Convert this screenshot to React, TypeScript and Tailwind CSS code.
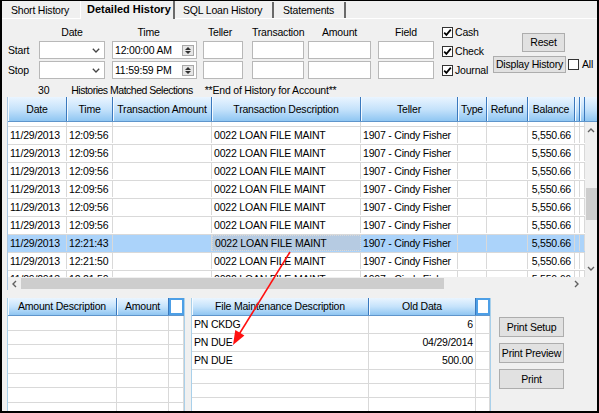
import React from "react";

/* column sets for the three grids (widths written out so tailwind picks them up) */
const mainCols = [
  { label: "Date", cls: "w-[59px]" },
  { label: "Time", cls: "w-[46px]" },
  { label: "Transaction Amount", cls: "w-[99px]" },
  { label: "Transaction Description", cls: "w-[149px]" },
  { label: "Teller", cls: "w-[97px]" },
  { label: "Type", cls: "w-[29px]" },
  { label: "Refund", cls: "w-[41px]" },
  { label: "Balance", cls: "w-[47px]" },
  { label: "", cls: "w-[5px]" },
  { label: "", cls: "w-[5px]" },
];

const history = [
  { date: "11/29/2013", time: "12:09:56" },
  { date: "11/29/2013", time: "12:09:56" },
  { date: "11/29/2013", time: "12:09:56" },
  { date: "11/29/2013", time: "12:09:56" },
  { date: "11/29/2013", time: "12:09:56" },
  { date: "11/29/2013", time: "12:09:56" },
  { date: "11/29/2013", time: "12:21:43", selected: true },
  { date: "11/29/2013", time: "12:21:50" },
  { date: "11/29/2013", time: "12:21:50" },
];

const fileMaint = [
  { desc: "PN CKDG", old: "6" },
  { desc: "PN DUE", old: "04/29/2014" },
  { desc: "PN DUE", old: "500.00" },
];

const headBg = "bg-linear-to-b from-[#eaf5ff] via-[#c6e3fb] to-[#8fc6f2]";
const headCell =
  "shrink-0 h-full flex items-center justify-center border-r border-[#3a78bd] shadow-[inset_1px_0_0_#f4faff] whitespace-nowrap overflow-hidden";
const cell =
  "shrink-0 h-full flex items-center border-r border-[#d9d9d9] px-[2px] whitespace-nowrap overflow-hidden";

const Check = ({ checked }: { checked?: boolean }) => (
  <span className="w-[11px] h-[11px] shrink-0 border border-[#333] bg-white flex items-center justify-center">
    {checked && (
      <svg width="9" height="9" viewBox="0 0 9 9">
        <path d="M1.2 4.6 L3.4 6.9 L7.8 1.6" stroke="#000" strokeWidth="1.7" fill="none" />
      </svg>
    )}
  </span>
);

const Btn = ({ children, className = "" }: { children: React.ReactNode; className?: string }) => (
  <div
    className={`flex items-center justify-center bg-[#e1e1e1] border border-[#adadad] whitespace-nowrap ${className}`}
  >
    {children}
  </div>
);

const Chevron = ({ dir }: { dir: "up" | "down" | "left" | "right" }) => {
  const d = {
    up: "M1 5 L4 2 L7 5",
    down: "M1 2 L4 5 L7 2",
    left: "M5 1 L2 4 L5 7",
    right: "M2 1 L5 4 L2 7",
  }[dir];
  return (
    <svg width="8" height="8" viewBox="0 0 8 8">
      <path d={d} stroke="#606060" strokeWidth="1.4" fill="none" />
    </svg>
  );
};

const Combo = () => (
  <div className="h-[18px] w-[66px] bg-white border border-[#b8b8b8] flex items-center justify-end pr-[4px]">
    <svg width="8" height="5" viewBox="0 0 8 5">
      <path d="M0.8 0.8 L4 4 L7.2 0.8" stroke="#444" strokeWidth="1.3" fill="none" />
    </svg>
  </div>
);

const TimeBox = ({ value }: { value: string }) => (
  <div className="h-[18px] w-[85px] bg-white border border-[#b8b8b8] flex items-center justify-between pl-[2px] pr-[2px]">
    <span>{value}</span>
    <div className="w-[12px] h-[11px] bg-[#e6e6e6] border border-[#a8a8a8] flex flex-col items-center justify-center gap-[1px]">
      <svg width="6" height="3" viewBox="0 0 6 3">
        <path d="M0 3 L3 0 L6 3 Z" fill="#333" />
      </svg>
      <svg width="6" height="3" viewBox="0 0 6 3">
        <path d="M0 0 L3 3 L6 0 Z" fill="#333" />
      </svg>
    </div>
  </div>
);

const TextBox = ({ w }: { w: string }) => (
  <div className={`h-[18px] ${w} bg-white border border-[#b8b8b8]`} />
);

export default function App() {
  return (
    <div className="relative w-[599px] h-[413px] overflow-hidden bg-[#f0f0f0] border-black border-t border-l-2 border-r-2 border-b-2 font-['Liberation_Sans',Arial,sans-serif] text-[10.5px] tracking-[-0.2px] text-black leading-none">
      {/* tabs */}
      <div className="flex h-[18px] items-end border-b border-white">
        <div className="h-[16px] w-[78px] pl-[9px] flex items-center">Short History</div>
        <div className="w-[95px] pl-[6px] flex items-center font-bold text-[11px] tracking-normal border-l border-white border-r-2 border-r-[#6a6a6a] bg-[#f0f0f0] -mb-[1px] h-[19px]">
          Detailed History
        </div>
        <div className="h-[16px] w-[99px] pl-[8px] flex items-center border-r-2 border-r-[#6a6a6a]">
          SQL Loan History
        </div>
        <div className="h-[16px] w-[72px] pl-[9px] flex items-center border-r-2 border-r-[#6a6a6a]">
          Statements
        </div>
      </div>

      {/* filters */}
      <div className="flex h-[64px]">
        <div className="flex flex-col">
          <div className="flex h-[14px] mt-[6px] items-center">
            <div className="w-[37px]" />
            <div className="w-[66px] text-center">Date</div>
            <div className="w-[85px] ml-[7px] text-center pr-[12px]">Time</div>
            <div className="w-[40px] ml-[6px] text-center pr-[6px]">Teller</div>
            <div className="w-[52px] ml-[9px] text-center pr-[6px]">Transaction</div>
            <div className="w-[63px] ml-[4px] text-center">Amount</div>
            <div className="w-[56px] ml-[7px] text-center">Field</div>
          </div>
          {[
            { label: "Start", time: "12:00:00 AM" },
            { label: "Stop", time: "11:59:59 PM" },
          ].map((r) => (
            <div key={r.label} className="flex items-center mt-[2px]">
              <div className="w-[37px] pl-[6px]">{r.label}</div>
              <Combo />
              <div className="ml-[7px]">
                <TimeBox value={r.time} />
              </div>
              <div className="ml-[6px]">
                <TextBox w="w-[40px]" />
              </div>
              <div className="ml-[9px]">
                <TextBox w="w-[52px]" />
              </div>
              <div className="ml-[4px]">
                <TextBox w="w-[63px]" />
              </div>
              <div className="ml-[7px]">
                <TextBox w="w-[56px]" />
              </div>
            </div>
          ))}
        </div>

        <div className="ml-[8px] w-[51px] flex flex-col pt-[8px] gap-[8px]">
          {["Cash", "Check", "Journal"].map((c) => (
            <div key={c} className="flex items-center gap-[2px] h-[11px]">
              <Check checked />
              <span>{c}</span>
            </div>
          ))}
        </div>

        <div className="flex flex-col pt-[14px]">
          <Btn className="ml-[29px] w-[43px] h-[19px]">Reset</Btn>
          <div className="flex items-center mt-[4px]">
            <Btn className="w-[73px] h-[17px]">Display History</Btn>
            <div className="ml-[2px]">
              <Check />
            </div>
            <span className="ml-[3px]">All</span>
          </div>
        </div>
      </div>

      {/* status line */}
      <div className="flex h-[13px] items-center mt-[1px]">
        <span className="ml-[36px]">30</span>
        <span className="ml-[22px] tracking-[-0.5px]">Histories Matched Selections</span>
        <span className="ml-[12px]">**End of History for Account**</span>
      </div>

      {/* main grid */}
      <div className="ml-[5px] flex flex-col border-l border-[#a9c6e2]">
        <div className={`flex h-[25px] ${headBg} border-b border-[#5f95cb]`}>
          {mainCols.map((c, i) => (
            <div key={i} className={`${headCell} ${c.cls}`}>
              {c.label}
            </div>
          ))}
          <div className="flex-1" />
        </div>
        <div className="flex h-[155px]">
          <div className="w-[577px] bg-white overflow-hidden flex flex-col">
            <div className="flex h-[5px] shrink-0 border-b border-[#d9d9d9]">
              {mainCols.map((c, i) => (
                <div key={i} className={`${cell} ${c.cls}`} />
              ))}
            </div>
            {history.map((r, i) => (
              <div
                key={i}
                className={`flex h-[18px] shrink-0 border-b border-[#d9d9d9] pb-[1px] ${
                  r.selected ? "bg-[#abd3fa]" : ""
                }`}
              >
                <div className={`${cell} w-[59px]`}>{r.date}</div>
                <div className={`${cell} w-[46px]`}>{r.time}</div>
                <div className={`${cell} w-[99px]`} />
                <div
                  className={`${cell} w-[149px] ${
                    r.selected ? "border border-dotted border-[#4b5d78] bg-[#b6cbe2]" : ""
                  }`}
                >
                  0022 LOAN FILE MAINT
                </div>
                <div className={`${cell} w-[97px]`}>1907 - Cindy Fisher</div>
                <div className={`${cell} w-[29px]`} />
                <div className={`${cell} w-[41px]`} />
                <div className={`${cell} w-[47px] justify-end pr-[3px]`}>5,550.66</div>
                <div className={`${cell} w-[5px]`} />
                <div className={`${cell} w-[5px]`} />
              </div>
            ))}
          </div>
          {/* vertical scrollbar */}
          <div className="flex-1 bg-[#f0f0f0] flex flex-col items-center">
            <div className="h-[17px] flex items-center">
              <Chevron dir="up" />
            </div>
            <div className="mt-[49px] w-[11px] h-[32px] bg-[#cdcdcd]" />
            <div className="flex-1" />
            <div className="h-[17px] flex items-center">
              <Chevron dir="down" />
            </div>
          </div>
        </div>
        {/* horizontal scrollbar */}
        <div className="flex h-[13px]">
          <div className="w-[577px] bg-[#f0f0f0] flex items-center">
            <div className="w-[13px] flex justify-center">
              <Chevron dir="left" />
            </div>
            <div className="w-[423px] h-[11px] bg-[#cdcdcd]" />
            <div className="flex-1" />
            <div className="w-[16px] flex justify-center">
              <Chevron dir="right" />
            </div>
          </div>
          <div className="flex-1 bg-[#f0f0f0]" />
        </div>
      </div>

      {/* bottom panels */}
      <div className="flex ml-[5px] mt-[8px]">
        {/* amount grid */}
        <div className="w-[178px] h-[115px] border-x border-[#a9d0ea] bg-white flex flex-col overflow-hidden">
          <div className={`flex h-[18px] shrink-0 ${headBg} border-b border-[#5f95cb]`}>
            <div className={`${headCell} w-[109px]`}>Amount Description</div>
            <div className={`${headCell} w-[52px]`}>Amount</div>
            <div className="w-[15px] h-full bg-white border-2 border-[#4d9fe6]" />
          </div>
          {[15, 14, 14, 15, 14, 15, 14].map((h, i) => (
            <div
              key={i}
              className={`flex shrink-0 border-b border-[#d9d9d9] ${h === 15 ? "h-[15px]" : "h-[14px]"}`}
            >
              <div className={`${cell} w-[109px]`} />
              <div className={`${cell} w-[52px]`} />
              <div className={`${cell} w-[15px]`} />
            </div>
          ))}
        </div>

        {/* file maintenance grid */}
        <div className="ml-[6px] w-[300px] h-[115px] border-x border-[#a9d0ea] bg-white flex flex-col overflow-hidden">
          <div className={`flex h-[18px] shrink-0 ${headBg} border-b border-[#5f95cb]`}>
            <div className={`${headCell} w-[177px]`}>File Maintenance Description</div>
            <div className={`${headCell} w-[107px]`}>Old Data</div>
            <div className="w-[14px] h-full bg-white border-2 border-[#4d9fe6]" />
          </div>
          {fileMaint.map((r, i) => (
            <div key={i} className="flex h-[18px] shrink-0 border-b border-[#d9d9d9]">
              <div className={`${cell} w-[177px]`}>{r.desc}</div>
              <div className={`${cell} w-[107px] justify-end`}>{r.old}</div>
              <div className={`${cell} w-[14px]`} />
            </div>
          ))}
          {[0, 1, 2].map((i) => (
            <div key={i} className="flex h-[14px] shrink-0 border-b border-[#d9d9d9]">
              <div className={`${cell} w-[177px]`} />
              <div className={`${cell} w-[107px]`} />
              <div className={`${cell} w-[14px]`} />
            </div>
          ))}
        </div>

        {/* print buttons */}
        <div className="ml-[8px] pt-[19px] flex flex-col gap-[6px]">
          <Btn className="w-[65px] h-[20px]">Print Setup</Btn>
          <Btn className="w-[65px] h-[20px]">Print Preview</Btn>
          <Btn className="w-[65px] h-[20px]">Print</Btn>
        </div>
      </div>

      {/* red callout arrow */}
      <svg
        className="absolute left-0 top-0 pointer-events-none"
        width="597"
        height="410"
        viewBox="2 1 597 410"
      >
        <line x1="290" y1="252" x2="238" y2="336" stroke="#ff1010" strokeWidth="1.6" />
        <path d="M233 345 L235.3 330 L244.4 335.6 Z" fill="#ff1010" />
      </svg>
    </div>
  );
}
